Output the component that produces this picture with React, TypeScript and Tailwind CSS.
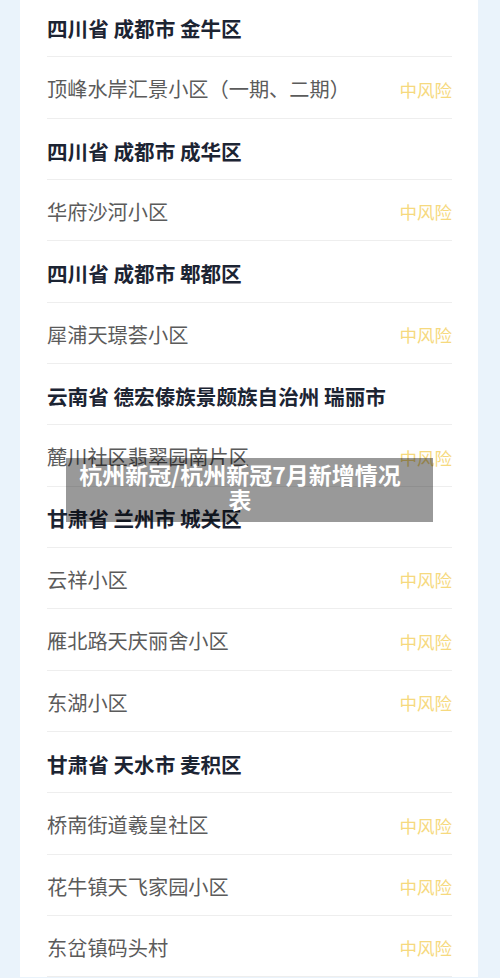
import React from 'react';

// 行数据：标题行（省市区）或小区行
type Row = { kind: 'head' | 'item'; text: string };

const rows: Row[] = [
  { kind: 'head', text: '四川省 成都市 金牛区' },
  { kind: 'item', text: '顶峰水岸汇景小区（一期、二期）' },
  { kind: 'head', text: '四川省 成都市 成华区' },
  { kind: 'item', text: '华府沙河小区' },
  { kind: 'head', text: '四川省 成都市 郫都区' },
  { kind: 'item', text: '犀浦天璟荟小区' },
  { kind: 'head', text: '云南省 德宏傣族景颇族自治州 瑞丽市' },
  { kind: 'item', text: '麓川社区翡翠园南片区' },
  { kind: 'head', text: '甘肃省 兰州市 城关区' },
  { kind: 'item', text: '云祥小区' },
  { kind: 'item', text: '雁北路天庆丽舍小区' },
  { kind: 'item', text: '东湖小区' },
  { kind: 'head', text: '甘肃省 天水市 麦积区' },
  { kind: 'item', text: '桥南街道羲皇社区' },
  { kind: 'item', text: '花牛镇天飞家园小区' },
  { kind: 'item', text: '东岔镇码头村' },
];

export default function App() {
  return (
    <div className="relative h-[978px] w-[500px] overflow-hidden bg-[#eaf3fb] pl-[20px] pr-[22px] font-['Noto_Sans_CJK_SC',sans-serif]">
      <div className="-mt-[4px] bg-white pl-[27px] pr-[26px]">
        {rows.map((r, i) => (
          <div
            key={i}
            className="flex h-[61.33px] items-center justify-between border-b border-[#eeeeee] pt-[4px]"
          >
            {r.kind === 'head' ? (
              <span className="text-[20.6px] font-bold leading-none text-[#1c2433]">{r.text}</span>
            ) : (
              <>
                <span className="text-[20.2px] leading-none text-[#5b5b5b]">{r.text}</span>
                <span className="text-[17.5px] leading-none text-[#f6d97e]">中风险</span>
              </>
            )}
          </div>
        ))}
      </div>

      {/* 标题遮罩 */}
      <div className="absolute left-[66px] top-[458px] h-[64px] w-[367px] bg-black/40 pt-[4px]">
        <div className="ml-[11px] w-[326px] text-center text-[23px] font-bold leading-[25px] text-white">
          杭州新冠/杭州新冠7月新增情况表
        </div>
      </div>
    </div>
  );
}
